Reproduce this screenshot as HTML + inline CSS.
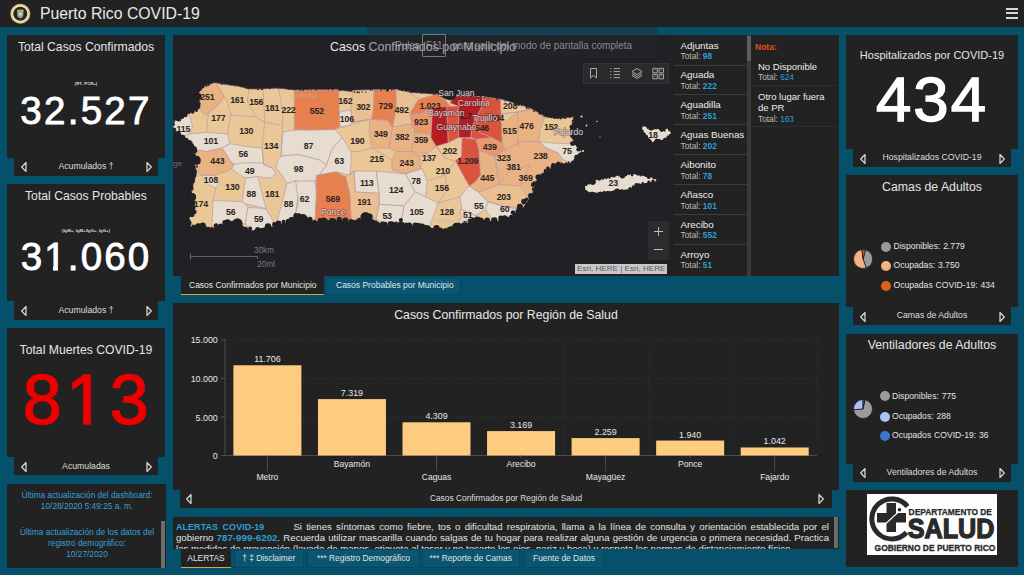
<!DOCTYPE html>
<html><head><meta charset="utf-8"><style>
*{margin:0;padding:0;box-sizing:border-box}
html,body{width:1024px;height:575px;overflow:hidden;background:#05506a;font-family:"Liberation Sans",sans-serif;color:#e6e6e6}
.a{position:absolute}
.c{position:absolute;background:#232222}
.t{position:absolute;white-space:nowrap;line-height:1}
.tc{position:absolute;white-space:nowrap;line-height:1;text-align:center}
.big{font-weight:400;-webkit-text-stroke:0.9px currentColor}
</style></head><body>
<div class="c" style="left:0;top:0;width:1024px;height:27px"></div>
<svg class="a" style="left:9px;top:3px" width="23" height="22" viewBox="0 0 23 22">
<circle cx="11.3" cy="10.7" r="10" fill="#d9c58a"/><circle cx="11.3" cy="10.7" r="8.4" fill="#f0e6c4"/>
<circle cx="11.3" cy="10.7" r="7" fill="#2b2416"/><path d="M8.2 6.8h6.2v5.2c0 1.9-1.5 3-3.1 3.6c-1.6-.6-3.1-1.7-3.1-3.6z" fill="#8fa58a"/>
<rect x="8.2" y="6.8" width="6.2" height="2" fill="#b9a46a"/><circle cx="11.3" cy="11" r="1.6" fill="#d8e0d0"/></svg>
<div class="t" style="left:40px;top:6px;font-size:15.8px;color:#e9e9e9">Puerto Rico COVID-19</div>
<div class="a" style="left:1006px;top:8px;width:12px;height:2px;background:#d6d6d6"></div>
<div class="a" style="left:1006px;top:12px;width:12px;height:2px;background:#d6d6d6"></div>
<div class="a" style="left:1006px;top:17px;width:12px;height:2px;background:#d6d6d6"></div>
<div class="c" style="left:7px;top:35px;width:158px;height:122.5px"></div>
<div class="c" style="left:14px;top:156.5px;width:144px;height:19px"></div>
<div class="tc" style="left:7px;width:158px;top:41.4px;font-size:12.2px;color:#e4e4e4">Total Casos Confirmados</div>
<div class="tc" style="left:7px;width:158px;top:82px;font-size:4.3px;font-weight:700;color:#dcdcdc">(RT- PCR+)</div>
<div class="tc big" style="left:7px;width:158px;top:92.3px;font-size:38.5px;color:#fff;letter-spacing:2.3px;-webkit-text-stroke:0.9px #fff">32.527</div>
<div class="tc" style="left:7px;width:158px;top:161.8px;font-size:8.7px;color:#dedede">Acumulados †</div>
<svg class="a" style="left:19.5px;top:162.3px" width="8" height="10"><path d="M6 0.5 L1.7 5 L6 9.5 Z" fill="none" stroke="#cfcfcf" stroke-width="1.3" stroke-linejoin="round"/></svg>
<svg class="a" style="left:144.5px;top:162.3px" width="8" height="10"><path d="M2 0.5 L6.3 5 L2 9.5 Z" fill="none" stroke="#cfcfcf" stroke-width="1.3" stroke-linejoin="round"/></svg>
<div class="c" style="left:7px;top:184px;width:158px;height:117.4px"></div>
<div class="c" style="left:14px;top:300.4px;width:144px;height:19.4px"></div>
<div class="tc" style="left:7px;width:158px;top:190.3px;font-size:12.2px;color:#e4e4e4">Total Casos Probables</div>
<div class="tc" style="left:7px;width:158px;top:228.5px;font-size:4.3px;font-weight:700;color:#dcdcdc">(IgM+, IgM+/IgG+, IgG+)</div>
<div class="tc big" style="left:7px;width:158px;top:237.5px;font-size:38.5px;color:#fff;letter-spacing:2.1px;-webkit-text-stroke:0.9px #fff">31.060</div>
<div class="tc" style="left:7px;width:158px;top:305.8px;font-size:8.7px;color:#dedede">Acumulados †</div>
<svg class="a" style="left:19.5px;top:306.4px" width="8" height="10"><path d="M6 0.5 L1.7 5 L6 9.5 Z" fill="none" stroke="#cfcfcf" stroke-width="1.3" stroke-linejoin="round"/></svg>
<svg class="a" style="left:144.5px;top:306.4px" width="8" height="10"><path d="M2 0.5 L6.3 5 L2 9.5 Z" fill="none" stroke="#cfcfcf" stroke-width="1.3" stroke-linejoin="round"/></svg>
<div class="c" style="left:7px;top:328.2px;width:158px;height:128.5px"></div>
<div class="c" style="left:14px;top:455.7px;width:144px;height:19.8px"></div>
<div class="tc" style="left:7px;width:158px;top:344.2px;font-size:12.2px;color:#e4e4e4">Total Muertes COVID-19</div>
<div class="tc big" style="left:9px;width:158px;top:364.5px;font-size:70px;color:#ee0000;letter-spacing:4.5px;-webkit-text-stroke:1.4px #ee0000">813</div>
<div class="tc" style="left:7px;width:158px;top:461.8px;font-size:8.7px;color:#dedede">Acumuladas</div>
<svg class="a" style="left:19.5px;top:461.9px" width="8" height="10"><path d="M6 0.5 L1.7 5 L6 9.5 Z" fill="none" stroke="#cfcfcf" stroke-width="1.3" stroke-linejoin="round"/></svg>
<svg class="a" style="left:144.5px;top:461.9px" width="8" height="10"><path d="M2 0.5 L6.3 5 L2 9.5 Z" fill="none" stroke="#cfcfcf" stroke-width="1.3" stroke-linejoin="round"/></svg>
<div class="c" style="left:44.5px;top:265.6px;width:8.5px;height:6px"></div>
<div class="c" style="left:58px;top:265.6px;width:8px;height:6px"></div>
<div class="c" style="left:69.5px;top:417.6px;width:13.5px;height:8px"></div>
<div class="c" style="left:91px;top:417.6px;width:14px;height:8px"></div>
<div class="c" style="left:7px;top:484px;width:159px;height:84px"></div>
<div class="a" style="left:161px;top:521px;width:4px;height:47px;background:#6b6b6b"></div>
<div class="tc" style="left:7px;width:160px;top:491px;font-size:8.3px;color:#35a0d4">Última actualización del dashboard:</div>
<div class="tc" style="left:7px;width:160px;top:502px;font-size:8.3px;color:#35a0d4">10/28/2020 5:49:25 a. m.</div>
<div class="tc" style="left:7px;width:160px;top:527.8px;font-size:8.3px;color:#35a0d4">Última actualización de los datos del</div>
<div class="tc" style="left:7px;width:160px;top:538.8px;font-size:8.3px;color:#35a0d4">registro demográfico:</div>
<div class="tc" style="left:7px;width:160px;top:549.8px;font-size:8.3px;color:#35a0d4">10/27/2020</div>
<div class="c" style="left:846px;top:35px;width:172px;height:113.6px"></div>
<div class="c" style="left:853px;top:147.6px;width:158px;height:19.8px"></div>
<div class="tc" style="left:846px;width:172px;top:49.7px;font-size:11px;color:#e4e4e4">Hospitalizados por COVID-19</div>
<div class="tc big" style="left:846px;width:172px;top:67.5px;font-size:63.5px;color:#fff;letter-spacing:2px;-webkit-text-stroke:1.4px #fff">434</div>
<div class="tc" style="left:846px;width:172px;top:153px;font-size:8.7px;color:#dedede">Hospitalizados COVID-19</div>
<svg class="a" style="left:858.5px;top:153.8px" width="8" height="10"><path d="M6 0.5 L1.7 5 L6 9.5 Z" fill="none" stroke="#cfcfcf" stroke-width="1.3" stroke-linejoin="round"/></svg>
<svg class="a" style="left:997.5px;top:153.8px" width="8" height="10"><path d="M2 0.5 L6.3 5 L2 9.5 Z" fill="none" stroke="#cfcfcf" stroke-width="1.3" stroke-linejoin="round"/></svg>
<div class="c" style="left:846px;top:174.8px;width:172px;height:132.6px"></div>
<div class="c" style="left:853px;top:306.4px;width:158px;height:18.6px"></div>
<div class="tc" style="left:846px;width:172px;top:181px;font-size:12.3px;color:#e4e4e4">Camas de Adultos</div>
<div class="tc" style="left:846px;width:172px;top:311px;font-size:8.7px;color:#dedede">Camas de Adultos</div>
<svg class="a" style="left:858.5px;top:312.0px" width="8" height="10"><path d="M6 0.5 L1.7 5 L6 9.5 Z" fill="none" stroke="#cfcfcf" stroke-width="1.3" stroke-linejoin="round"/></svg>
<svg class="a" style="left:997.5px;top:312.0px" width="8" height="10"><path d="M2 0.5 L6.3 5 L2 9.5 Z" fill="none" stroke="#cfcfcf" stroke-width="1.3" stroke-linejoin="round"/></svg>
<div class="a" style="left:881px;top:241.6px;width:10px;height:10px;border-radius:50%;background:#9b9b9b"></div>
<div class="t" style="left:893.5px;top:242.0px;font-size:8.6px;color:#e2e2e2;word-spacing:0.5px">Disponibles: 2.779</div>
<div class="a" style="left:881px;top:261px;width:10px;height:10px;border-radius:50%;background:#f3b184"></div>
<div class="t" style="left:893.5px;top:261.4px;font-size:8.6px;color:#e2e2e2;word-spacing:0.5px">Ocupadas: 3.750</div>
<div class="a" style="left:881px;top:280.5px;width:10px;height:10px;border-radius:50%;background:#d9631e"></div>
<div class="t" style="left:893.5px;top:280.9px;font-size:8.6px;color:#e2e2e2;word-spacing:0.5px">Ocupadas COVID-19: 434</div>
<svg class="a" style="left:852.2px;top:248.1px" width="22" height="22" viewBox="-11 -11 22 22"><path d="M0 0 L2.46 -9.18 A9.5 9.5 0 0 1 3.25 8.93 Z" fill="#9b9b9b" stroke="#222020" stroke-width="0.8" stroke-linejoin="round"/><path d="M0 0 L3.25 8.93 A9.5 9.5 0 1 1 -0.99 -9.45 Z" fill="#f3b184" stroke="#222020" stroke-width="0.8" stroke-linejoin="round"/><path d="M0 0 L-0.99 -9.45 A9.5 9.5 0 0 1 2.46 -9.18 Z" fill="#c9571a" stroke="#222020" stroke-width="0.8" stroke-linejoin="round"/></svg>
<div class="c" style="left:846px;top:333.8px;width:172px;height:129.8px"></div>
<div class="c" style="left:853px;top:462.6px;width:158px;height:19px"></div>
<div class="tc" style="left:846px;width:172px;top:339px;font-size:12.3px;color:#e4e4e4">Ventiladores de Adultos</div>
<div class="tc" style="left:846px;width:172px;top:468px;font-size:8.7px;color:#dedede">Ventiladores de Adultos</div>
<svg class="a" style="left:858.5px;top:468.40000000000003px" width="8" height="10"><path d="M6 0.5 L1.7 5 L6 9.5 Z" fill="none" stroke="#cfcfcf" stroke-width="1.3" stroke-linejoin="round"/></svg>
<svg class="a" style="left:997.5px;top:468.40000000000003px" width="8" height="10"><path d="M2 0.5 L6.3 5 L2 9.5 Z" fill="none" stroke="#cfcfcf" stroke-width="1.3" stroke-linejoin="round"/></svg>
<div class="a" style="left:879.5px;top:391.2px;width:10px;height:10px;border-radius:50%;background:#9b9b9b"></div>
<div class="t" style="left:892.0px;top:391.59999999999997px;font-size:8.6px;color:#e2e2e2;word-spacing:0.5px">Disponibles: 775</div>
<div class="a" style="left:879.5px;top:411.5px;width:10px;height:10px;border-radius:50%;background:#a9c2f3"></div>
<div class="t" style="left:892.0px;top:411.9px;font-size:8.6px;color:#e2e2e2;word-spacing:0.5px">Ocupados: 288</div>
<div class="a" style="left:879.5px;top:431px;width:10px;height:10px;border-radius:50%;background:#3b78c8"></div>
<div class="t" style="left:892.0px;top:431.4px;font-size:8.6px;color:#e2e2e2;word-spacing:0.5px">Ocupados COVID-19: 36</div>
<svg class="a" style="left:851.6px;top:398.4px" width="22" height="22" viewBox="-11 -11 22 22"><path d="M0 0 L1.98 -9.29 A9.5 9.5 0 1 1 -9.48 0.66 Z" fill="#9b9b9b" stroke="#222020" stroke-width="0.8" stroke-linejoin="round"/><path d="M0 0 L-9.48 0.66 A9.5 9.5 0 0 1 -0.00 -9.50 Z" fill="#a9c2f3" stroke="#222020" stroke-width="0.8" stroke-linejoin="round"/><path d="M0 0 L0.00 -9.50 A9.5 9.5 0 0 1 1.98 -9.29 Z" fill="#2f5f9e" stroke="#222020" stroke-width="0.8" stroke-linejoin="round"/></svg>
<div class="c" style="left:846px;top:490px;width:172px;height:77px"></div>
<div class="a" style="left:867px;top:494px;width:130px;height:61px;background:#fdfdfd"></div>
<svg class="a" style="left:867px;top:494px" width="130" height="61" viewBox="0 0 130 61">
<path d="M40.5 12.5 A20 20 0 1 0 39.5 38.5" fill="none" stroke="#2a2a2a" stroke-width="5"/>
<path d="M19.5 9 h9.5 v10 h10 v9.5 h-10 v9.5 h-9.5 v-9.5 h-9.5 v-9.5 h9.5 z" fill="#2a2a2a"/>
<line x1="13" y1="35" x2="33" y2="16.5" stroke="#fff" stroke-width="1.1"/>
<circle cx="32.5" cy="15.8" r="1.8" fill="#2a2a2a"/>
<g font-family="Liberation Sans" font-weight="700" fill="#2a2a2a" stroke="#2a2a2a">
<text x="41.6" y="21.3" font-size="8.6" textLength="83.3" lengthAdjust="spacingAndGlyphs" stroke-width="0.25">DEPARTAMENTO DE</text>
<text x="40.8" y="43.8" font-size="27" textLength="86.6" lengthAdjust="spacingAndGlyphs" stroke-width="1.3">SALUD</text>
<text x="7.6" y="57" font-size="8.8" textLength="120.7" lengthAdjust="spacingAndGlyphs" stroke-width="0.3">GOBIERNO DE PUERTO RICO</text>
</g>
</svg>
<div class="a" style="left:173px;top:35px;width:498px;height:241px;background:#212024"></div>
<svg class="a" style="left:0;top:0" width="1024" height="575" viewBox="0 0 1024 575">
<defs><clipPath id="mc"><rect x="173" y="35" width="498" height="241"/></clipPath></defs>
<g clip-path="url(#mc)">
<polygon points="173.5,121.1 180.4,116.7 189.1,113.2 197.8,109.8 200.4,104.5 199.5,92.4 204.8,86.3 215.2,82.8 227.4,84.6 239.5,86.3 248.2,88.9 262.1,88.9 277.7,88.0 294.3,90.0 318.0,89.5 338.7,89.8 352.0,91.5 362.0,92.4 374.3,89.8 396.0,89.5 410.0,92.4 437.8,94.1 444.8,99.3 455.2,95.9 483.0,96.7 500.4,99.3 521.2,105.4 531.5,109.1 544.9,116.8 558.3,118.7 573.6,116.8 571.7,128.3 573.6,143.6 581.2,151.2 577.4,157.0 569.8,162.7 558.3,164.6 544.9,170.4 535.3,181.9 531.5,195.0 525.8,201.6 511.7,215.7 494.5,222.0 475.7,220.4 456.9,225.1 441.3,229.8 425.6,228.2 410.0,226.7 401.3,221.2 384.6,225.4 367.9,217.1 351.2,221.2 331.8,219.8 315.0,221.2 303.9,218.5 295.6,214.3 288.3,221.2 267.4,226.8 253.5,231.0 239.6,225.4 225.7,222.6 211.8,228.2 197.8,225.4 189.5,226.8 188.1,218.5 195.1,211.5 189.5,205.9 190.9,197.6 192.3,187.8 195.1,178.1 196.4,168.4 199.2,160.0 194.3,158.4 196.1,149.7 192.6,142.8 183.9,135.8 173.5,130.0" fill="#e9c796" stroke="#6b4a5a" stroke-width="0.8"/>
<polygon points="173.5,121.1 180.4,116.7 189.1,114.1 192.6,127.1 189.1,134.1 183.9,135.8 173.5,130.0" fill="#e6dccf" stroke="#bc9aa6" stroke-width="0.7"/>
<polygon points="183.9,135.8 189.1,134.1 206.5,132.3 227.4,134.1 230.0,143.6 222.1,148.0 206.5,151.5 196.1,149.7 192.6,142.8" fill="#e6dccf" stroke="#bc9aa6" stroke-width="0.7"/>
<polygon points="222.1,148.0 230.0,143.6 244.7,146.3 262.1,148.0 263.8,165.4 251.7,163.6 237.8,165.4 230.8,161.9" fill="#e6dccf" stroke="#bc9aa6" stroke-width="0.7"/>
<polygon points="283.0,132.0 295.1,130.0 307.4,130.0 335.2,129.5 342.1,137.6 331.7,149.7 326.6,165.0 319.4,160.0 299.0,154.5 281.2,156.0 282.0,140.0" fill="#e6dccf" stroke="#bc9aa6" stroke-width="0.7"/>
<polygon points="281.2,156.0 299.0,154.5 319.4,160.0 326.6,165.0 319.2,175.3 315.0,180.9 303.9,182.3 295.6,180.9 287.0,183.7 281.3,174.0 276.0,168.0 278.0,160.0" fill="#e6dccf" stroke="#bc9aa6" stroke-width="0.7"/>
<polygon points="229.8,165.6 242.4,162.8 261.9,162.8 273.0,168.4 275.8,173.9 270.2,178.1 257.7,176.7 245.2,178.1 234.0,171.1" fill="#e6dccf" stroke="#bc9aa6" stroke-width="0.7"/>
<polygon points="202.0,175.3 214.5,175.3 218.7,183.7 215.9,187.8 206.2,183.7" fill="#e6dccf" stroke="#bc9aa6" stroke-width="0.7"/>
<polygon points="245.2,178.1 257.7,176.7 266.0,208.7 242.4,203.1" fill="#e6dccf" stroke="#bc9aa6" stroke-width="0.7"/>
<polygon points="213.1,200.4 242.4,201.8 247.9,207.3 245.2,224.0 225.7,222.6 211.8,228.2" fill="#e6dccf" stroke="#bc9aa6" stroke-width="0.7"/>
<polygon points="247.9,207.3 266.0,208.7 275.8,225.4 267.4,226.8 253.5,231.0 245.2,224.0" fill="#e6dccf" stroke="#bc9aa6" stroke-width="0.7"/>
<polygon points="281.3,206.0 286.9,183.7 295.3,180.9 300.0,183.7 295.3,214.3 288.3,221.2 275.8,225.4" fill="#e6dccf" stroke="#bc9aa6" stroke-width="0.7"/>
<polygon points="295.6,180.9 315.0,180.9 316.4,194.8 315.0,221.2 303.9,218.5 295.6,214.3 298.4,201.8" fill="#e6dccf" stroke="#bc9aa6" stroke-width="0.7"/>
<polygon points="331.7,149.7 342.1,137.6 350.8,151.5 351.2,160.0 349.8,175.3 335.9,171.8 324.8,173.9 319.2,175.3 326.6,165.0" fill="#e6dccf" stroke="#bc9aa6" stroke-width="0.7"/>
<polygon points="339.5,112.4 349.1,109.8 352.6,115.0 350.8,125.4 342.1,127.1 339.5,123.7" fill="#e6dccf" stroke="#bc9aa6" stroke-width="0.7"/>
<polygon points="354.0,171.1 376.3,171.1 379.1,193.4 355.4,192.0" fill="#e6dccf" stroke="#bc9aa6" stroke-width="0.7"/>
<polygon points="376.3,171.1 405.5,173.9 415.3,192.0 404.1,205.9 379.1,204.5 379.1,193.4" fill="#e6dccf" stroke="#bc9aa6" stroke-width="0.7"/>
<polygon points="379.1,204.5 404.1,205.9 401.3,221.2 384.6,225.4 376.3,218.5" fill="#e6dccf" stroke="#bc9aa6" stroke-width="0.7"/>
<polygon points="405.5,173.9 422.5,168.8 427.2,181.3 425.6,196.9 415.3,192.0" fill="#e6dccf" stroke="#bc9aa6" stroke-width="0.7"/>
<polygon points="415.3,192.0 425.6,196.9 438.2,203.2 433.5,215.7 428.8,228.2 410.0,226.7 401.3,221.2 404.1,205.9" fill="#e6dccf" stroke="#bc9aa6" stroke-width="0.7"/>
<polygon points="469.4,186.0 478.8,192.2 488.2,201.6 485.1,209.4 475.7,215.7 461.6,209.4 460.1,196.9 464.8,190.7" fill="#e6dccf" stroke="#bc9aa6" stroke-width="0.7"/>
<polygon points="460.0,209.0 475.7,215.7 475.7,220.4 456.9,225.1 461.6,217.0" fill="#e6dccf" stroke="#bc9aa6" stroke-width="0.7"/>
<polygon points="488.2,201.6 503.9,206.3 519.5,209.4 511.7,215.7 494.5,222.0 485.1,209.4" fill="#e6dccf" stroke="#bc9aa6" stroke-width="0.7"/>
<polygon points="539.1,141.7 558.3,143.6 573.6,143.6 581.2,151.2 577.4,157.0 569.8,162.7 562.1,158.9 558.3,153.2 544.9,147.4" fill="#e6dccf" stroke="#bc9aa6" stroke-width="0.7"/>
<polygon points="199.5,92.4 204.8,86.3 215.2,82.8 222.1,92.4 223.9,97.6 216.9,106.3 208.2,113.2 205.6,115.8 200.4,109.8 200.4,104.5" fill="#e8b283" stroke="#bc9aa6" stroke-width="0.7"/>
<polygon points="196.1,149.7 206.5,151.5 222.1,148.0 230.8,161.9 234.0,166.0 228.5,171.1 214.5,175.3 202.0,175.3 196.4,170.0 194.3,158.4" fill="#e8b283" stroke="#bc9aa6" stroke-width="0.7"/>
<polygon points="369.9,119.3 387.3,120.2 392.5,127.1 389.1,148.0 371.7,148.0 369.1,132.3" fill="#e8b283" stroke="#bc9aa6" stroke-width="0.7"/>
<polygon points="392.5,127.1 411.7,123.7 415.1,132.3 411.7,151.5 396.0,151.5 389.1,148.0" fill="#e8b283" stroke="#bc9aa6" stroke-width="0.7"/>
<polygon points="415.1,132.3 430.9,134.1 436.1,146.3 427.4,153.2 411.7,151.5" fill="#e8b283" stroke="#bc9aa6" stroke-width="0.7"/>
<polygon points="396.0,151.5 411.7,151.5 420.0,155.0 420.0,168.0 405.5,173.9 392.0,170.0 392.0,160.0" fill="#e8b283" stroke="#bc9aa6" stroke-width="0.7"/>
<polygon points="494.5,150.0 505.0,150.0 523.0,141.0 539.1,141.7 544.9,147.4 558.3,153.2 562.1,158.9 558.3,164.6 544.9,170.4 535.3,181.9 531.5,195.0 525.8,201.6 519.5,209.4 503.9,206.3 488.2,201.6 478.8,192.2 499.2,184.4" fill="#e8b283" stroke="#bc9aa6" stroke-width="0.7"/>
<polygon points="478.8,150.0 494.5,156.3 499.2,184.4 478.8,192.2 469.4,186.0 475.7,181.3 480.4,175.0" fill="#e8b283" stroke="#bc9aa6" stroke-width="0.7"/>
<polygon points="517.8,112.0 531.5,109.1 544.9,116.8 540.0,130.0 539.1,141.7 523.0,141.0 505.0,150.0 502.0,142.8 500.4,125.4" fill="#e8b283" stroke="#bc9aa6" stroke-width="0.7"/>
<polygon points="478.8,192.2 499.2,184.4 519.5,186.0 528.9,198.5 522.6,207.9 503.9,206.3 488.2,201.6" fill="#eabf92" stroke="#bc9aa6" stroke-width="0.7"/>
<polygon points="352.6,90.6 374.3,89.8 373.4,109.8 371.7,119.3 366.5,120.2 352.6,122.0 350.8,109.8" fill="#eabf92" stroke="#bc9aa6" stroke-width="0.7"/>
<polygon points="396.0,89.5 410.0,92.4 418.7,99.3 410.0,113.2 411.7,123.7 392.5,127.1 396.0,109.8" fill="#eabf92" stroke="#bc9aa6" stroke-width="0.7"/>
<polygon points="345.7,176.7 354.0,171.1 355.4,192.0 379.1,193.4 379.1,204.5 376.3,218.5 367.9,217.1 351.2,219.8 349.8,194.8" fill="#eabf92" stroke="#bc9aa6" stroke-width="0.7"/>
<polygon points="439.0,137.0 455.0,136.0 462.1,137.6 461.6,156.3 455.4,161.0 445.0,158.0 436.1,146.3" fill="#e9c796" stroke="#bc9aa6" stroke-width="0.7"/>
<polygon points="476.0,139.3 483.0,137.0 491.7,137.6 502.1,142.8 505.0,150.0 494.5,156.3 478.8,150.0" fill="#e8996a" stroke="#bc9aa6" stroke-width="0.7"/>
<polygon points="500.4,99.3 521.2,105.4 531.5,109.1 517.8,112.0 501.0,114.0" fill="#e9c796" stroke="#bc9aa6" stroke-width="0.7"/>
<polygon points="410.0,113.2 420.4,113.2 432.6,108.0 430.9,134.1 415.1,132.3 411.7,123.7" fill="#e8996a" stroke="#bc9aa6" stroke-width="0.7"/>
<polygon points="294.3,90.6 338.7,89.8 339.5,127.1 335.2,129.5 307.4,130.0 300.4,129.5 294.3,130.0" fill="#e6804e" stroke="#bc9aa6" stroke-width="0.7"/>
<polygon points="374.3,89.8 396.0,89.8 396.0,109.8 392.5,127.1 387.3,120.2 371.7,119.3 373.4,109.8" fill="#e6804e" stroke="#bc9aa6" stroke-width="0.7"/>
<polygon points="316.4,175.3 324.8,173.9 335.9,171.8 345.7,176.7 349.8,194.8 351.2,219.8 331.8,219.8 315.0,221.2 316.4,194.8" fill="#e6804e" stroke="#bc9aa6" stroke-width="0.7"/>
<polygon points="418.7,99.3 437.8,94.1 444.8,99.3 450.0,106.3 432.6,108.0 420.4,113.2 410.0,113.2" fill="#e6804e" stroke="#bc9aa6" stroke-width="0.7"/>
<polygon points="462.1,137.6 476.0,139.3 478.8,150.0 480.4,175.0 475.7,181.3 469.4,186.0 464.8,178.2 455.4,161.0 461.6,156.3" fill="#d9533d" stroke="#bc9aa6" stroke-width="0.7"/>
<polygon points="483.0,96.7 500.4,99.3 502.1,142.8 491.7,137.6 479.5,132.3 476.0,118.0 481.0,108.0" fill="#d9533d" stroke="#bc9aa6" stroke-width="0.7"/>
<polygon points="446.5,106.3 458.7,106.3 458.7,137.6 448.2,142.8" fill="#d9533d" stroke="#bc9aa6" stroke-width="0.7"/>
<polygon points="476.0,118.0 479.5,132.3 491.7,137.6 476.0,139.3 470.8,137.6 471.5,128.0" fill="#d9533d" stroke="#bc9aa6" stroke-width="0.7"/>
<polygon points="432.6,108.0 446.5,106.3 448.2,142.8 436.1,146.3 430.9,137.6" fill="#b71d20" stroke="#bc9aa6" stroke-width="0.7"/>
<polygon points="455.2,96.0 483.0,96.7 481.0,108.0 476.0,118.0 471.5,128.0 470.8,137.6 458.7,137.6 458.7,106.3 450.0,103.0" fill="#b71d20" stroke="#bc9aa6" stroke-width="0.7"/>
<polyline points="216.0,82.8 227.4,101.0 230.8,115.0" fill="none" stroke="#bc9aa6" stroke-width="0.7"/>
<polyline points="230.8,115.0 255.2,116.7 263.8,121.9" fill="none" stroke="#bc9aa6" stroke-width="0.7"/>
<polyline points="249.1,88.9 247.3,101.0 255.2,115.0" fill="none" stroke="#bc9aa6" stroke-width="0.7"/>
<polyline points="263.0,89.0 264.7,121.9 262.1,148.0 263.8,165.4" fill="none" stroke="#bc9aa6" stroke-width="0.7"/>
<polyline points="264.7,121.9 281.2,125.4" fill="none" stroke="#bc9aa6" stroke-width="0.7"/>
<polyline points="278.6,88.2 283.0,115.0 281.2,155.0" fill="none" stroke="#bc9aa6" stroke-width="0.7"/>
<polyline points="230.8,115.0 227.4,134.1" fill="none" stroke="#bc9aa6" stroke-width="0.7"/>
<polyline points="208.2,113.2 206.5,132.3" fill="none" stroke="#bc9aa6" stroke-width="0.7"/>
<polyline points="336.0,128.9 366.5,120.2" fill="none" stroke="#bc9aa6" stroke-width="0.7"/>
<polyline points="359.5,151.5 371.7,148.0" fill="none" stroke="#bc9aa6" stroke-width="0.7"/>
<polyline points="350.8,151.5 359.5,151.5" fill="none" stroke="#bc9aa6" stroke-width="0.7"/>
<polyline points="352.6,122.0 369.9,119.3" fill="none" stroke="#bc9aa6" stroke-width="0.7"/>
<polyline points="263.8,165.4 273.0,168.4" fill="none" stroke="#bc9aa6" stroke-width="0.7"/>
<polyline points="287.0,183.7 286.9,183.7" fill="none" stroke="#bc9aa6" stroke-width="0.7"/>
<polyline points="213.1,200.4 215.9,187.8" fill="none" stroke="#bc9aa6" stroke-width="0.7"/>
<polyline points="197.8,173.9 202.0,175.3" fill="none" stroke="#bc9aa6" stroke-width="0.7"/>
<polyline points="392.0,160.0 371.7,148.0" fill="none" stroke="#bc9aa6" stroke-width="0.7"/>
<polyline points="354.0,171.1 349.8,175.3" fill="none" stroke="#bc9aa6" stroke-width="0.7"/>
<polyline points="420.0,155.0 427.4,153.2" fill="none" stroke="#bc9aa6" stroke-width="0.7"/>
<polyline points="420.0,168.0 422.5,168.8" fill="none" stroke="#bc9aa6" stroke-width="0.7"/>
<polyline points="427.2,181.3 445.0,175.0 455.4,161.0" fill="none" stroke="#bc9aa6" stroke-width="0.7"/>
<polyline points="438.2,203.2 460.1,196.9" fill="none" stroke="#bc9aa6" stroke-width="0.7"/>
<polyline points="436.1,146.3 445.0,158.0" fill="none" stroke="#bc9aa6" stroke-width="0.7"/>
<polyline points="427.4,153.2 420.0,168.0" fill="none" stroke="#bc9aa6" stroke-width="0.7"/>
<polyline points="445.0,175.0 447.0,190.0 438.2,203.2" fill="none" stroke="#bc9aa6" stroke-width="0.7"/>
<polyline points="500.4,103.0 500.4,99.3" fill="none" stroke="#bc9aa6" stroke-width="0.7"/>
<polyline points="505.0,150.0 510.0,170.0 499.2,184.4" fill="none" stroke="#bc9aa6" stroke-width="0.7"/>
<polyline points="501.0,114.0 517.8,112.0 531.5,109.1" fill="none" stroke="#bc9aa6" stroke-width="0.7"/>
<polyline points="517.8,112.0 518.0,147.0" fill="none" stroke="#bc9aa6" stroke-width="0.7"/>
<polyline points="510.0,170.0 530.0,165.0" fill="none" stroke="#bc9aa6" stroke-width="0.7"/>
<polyline points="519.5,186.0 530.0,165.0" fill="none" stroke="#bc9aa6" stroke-width="0.7"/>
<polygon points="585.1,185.7 596.6,180.0 619.5,175.2 634.8,174.2 654.0,178.0 657.8,180.9 642.5,183.8 627.2,189.5 608.0,191.4 590.8,193.3 585.1,189.5" fill="#e6dccf"/>
<polygon points="641.0,124.5 646.0,127.0 651.0,130.5 657.0,128.5 663.0,131.5 667.0,128.5 672.0,132.5 668.0,136.5 662.0,140.0 656.0,138.5 653.0,142.5 648.0,137.5 643.0,131.0" fill="#e6dccf"/>
<polygon points="438,92 443,96 447,99.5 451,100.5 455,98.5 457,94.5" fill="#212024"/>
<g fill="#e6dccf"><circle cx="581.5" cy="116.5" r="1.1"/><circle cx="586.5" cy="125.5" r="0.9"/><circle cx="597" cy="121.5" r="0.7"/><circle cx="583" cy="151" r="1"/><circle cx="600" cy="137" r="0.6"/></g>
<g fill="#212024"><circle cx="174.5" cy="121.0" r="0.9"/><circle cx="176.8" cy="118.5" r="2.3"/><circle cx="178.8" cy="119.1" r="2.5"/><circle cx="181.9" cy="116.8" r="2.3"/><circle cx="185.1" cy="114.8" r="2.5"/><circle cx="189.1" cy="113.3" r="0.7"/><circle cx="189.3" cy="112.5" r="0.9"/><circle cx="192.6" cy="111.9" r="1.8"/><circle cx="196.6" cy="110.7" r="1.3"/><circle cx="198.3" cy="107.8" r="1.5"/><circle cx="199.2" cy="105.7" r="1.2"/><circle cx="199.7" cy="103.8" r="1.0"/><circle cx="200.2" cy="99.3" r="0.4"/><circle cx="199.6" cy="97.2" r="2.1"/><circle cx="199.2" cy="95.3" r="2.0"/><circle cx="201.0" cy="90.5" r="0.4"/><circle cx="202.0" cy="88.9" r="0.5"/><circle cx="203.5" cy="87.0" r="1.1"/><circle cx="206.5" cy="85.9" r="0.9"/><circle cx="208.4" cy="85.0" r="1.1"/><circle cx="210.3" cy="84.1" r="0.5"/><circle cx="212.8" cy="83.3" r="0.4"/><circle cx="215.5" cy="82.5" r="0.5"/><circle cx="220.8" cy="83.6" r="0.8"/><circle cx="222.3" cy="84.2" r="0.8"/><circle cx="224.9" cy="84.2" r="0.4"/><circle cx="229.2" cy="84.8" r="0.7"/><circle cx="231.6" cy="84.9" r="0.6"/><circle cx="235.0" cy="86.0" r="0.6"/><circle cx="239.3" cy="85.8" r="0.8"/><circle cx="240.7" cy="86.4" r="0.8"/><circle cx="242.6" cy="87.3" r="0.3"/><circle cx="246.2" cy="88.5" r="0.4"/><circle cx="248.5" cy="88.3" r="0.8"/><circle cx="252.7" cy="88.9" r="0.3"/><circle cx="254.8" cy="88.6" r="0.3"/><circle cx="257.8" cy="89.3" r="0.9"/><circle cx="260.3" cy="89.0" r="0.4"/><circle cx="262.2" cy="89.2" r="0.9"/><circle cx="266.1" cy="88.5" r="0.2"/><circle cx="269.5" cy="88.5" r="0.7"/><circle cx="270.3" cy="88.0" r="0.7"/><circle cx="273.3" cy="87.9" r="0.4"/><circle cx="277.3" cy="87.6" r="0.8"/><circle cx="278.3" cy="88.4" r="0.6"/><circle cx="280.6" cy="88.2" r="0.4"/><circle cx="285.9" cy="88.5" r="0.5"/><circle cx="288.6" cy="89.4" r="0.5"/><circle cx="289.3" cy="89.1" r="0.4"/><circle cx="293.9" cy="89.6" r="0.5"/><circle cx="294.5" cy="89.6" r="0.7"/><circle cx="298.9" cy="89.6" r="0.5"/><circle cx="300.4" cy="89.9" r="0.8"/><circle cx="303.3" cy="90.1" r="0.9"/><circle cx="305.2" cy="89.6" r="0.3"/><circle cx="307.8" cy="89.4" r="0.8"/><circle cx="311.0" cy="90.0" r="0.6"/><circle cx="315.3" cy="89.0" r="0.7"/><circle cx="316.5" cy="89.8" r="0.8"/><circle cx="318.7" cy="89.4" r="0.4"/><circle cx="321.7" cy="89.2" r="0.5"/><circle cx="325.0" cy="89.2" r="0.5"/><circle cx="328.1" cy="89.5" r="0.8"/><circle cx="331.4" cy="89.8" r="0.2"/><circle cx="332.8" cy="89.6" r="0.8"/><circle cx="337.9" cy="89.7" r="0.6"/><circle cx="340.2" cy="89.7" r="1.3"/><circle cx="342.0" cy="90.2" r="0.4"/><circle cx="345.5" cy="90.6" r="0.7"/><circle cx="348.3" cy="90.8" r="0.6"/><circle cx="350.6" cy="90.8" r="0.6"/><circle cx="354.3" cy="91.9" r="0.8"/><circle cx="357.2" cy="92.3" r="0.9"/><circle cx="359.1" cy="92.3" r="0.9"/><circle cx="362.1" cy="91.9" r="0.7"/><circle cx="365.6" cy="91.9" r="0.7"/><circle cx="370.7" cy="89.8" r="0.9"/><circle cx="372.4" cy="89.8" r="0.6"/><circle cx="374.7" cy="89.8" r="0.5"/><circle cx="377.5" cy="90.0" r="0.4"/><circle cx="381.2" cy="89.8" r="0.9"/><circle cx="384.1" cy="88.8" r="1.0"/><circle cx="387.3" cy="89.9" r="1.5"/><circle cx="388.0" cy="89.9" r="0.8"/><circle cx="391.7" cy="89.7" r="0.8"/><circle cx="393.7" cy="89.2" r="0.8"/><circle cx="396.3" cy="89.5" r="0.3"/><circle cx="399.1" cy="89.6" r="0.9"/><circle cx="402.0" cy="89.8" r="1.4"/><circle cx="405.7" cy="91.2" r="0.5"/><circle cx="407.9" cy="92.0" r="0.3"/><circle cx="410.3" cy="92.6" r="0.6"/><circle cx="413.6" cy="92.7" r="0.4"/><circle cx="416.9" cy="93.0" r="0.3"/><circle cx="419.0" cy="92.9" r="0.2"/><circle cx="421.6" cy="93.4" r="0.5"/><circle cx="426.2" cy="93.1" r="0.5"/><circle cx="427.8" cy="93.0" r="0.6"/><circle cx="430.4" cy="93.4" r="0.8"/><circle cx="433.3" cy="94.1" r="0.8"/><circle cx="435.2" cy="94.2" r="0.7"/><circle cx="438.2" cy="94.0" r="0.8"/><circle cx="440.8" cy="96.3" r="0.4"/><circle cx="443.1" cy="97.5" r="0.5"/><circle cx="447.2" cy="98.0" r="0.6"/><circle cx="448.2" cy="98.2" r="0.8"/><circle cx="451.2" cy="97.1" r="0.6"/><circle cx="452.6" cy="96.7" r="0.7"/><circle cx="455.3" cy="96.0" r="0.2"/><circle cx="459.6" cy="95.8" r="0.6"/><circle cx="462.7" cy="96.2" r="0.8"/><circle cx="466.3" cy="96.1" r="0.3"/><circle cx="466.4" cy="96.0" r="0.8"/><circle cx="471.1" cy="96.2" r="0.8"/><circle cx="473.3" cy="95.9" r="0.8"/><circle cx="476.3" cy="96.1" r="0.8"/><circle cx="478.1" cy="96.6" r="0.2"/><circle cx="480.5" cy="96.4" r="0.8"/><circle cx="484.8" cy="97.4" r="0.7"/><circle cx="488.2" cy="97.3" r="0.7"/><circle cx="490.7" cy="97.9" r="0.3"/><circle cx="491.9" cy="98.1" r="0.4"/><circle cx="496.7" cy="98.8" r="0.9"/><circle cx="498.9" cy="98.9" r="0.7"/><circle cx="502.1" cy="99.9" r="0.3"/><circle cx="504.8" cy="100.9" r="0.5"/><circle cx="505.8" cy="100.7" r="0.5"/><circle cx="510.0" cy="102.1" r="0.5"/><circle cx="512.0" cy="102.8" r="0.4"/><circle cx="516.0" cy="103.7" r="1.8"/><circle cx="518.1" cy="104.7" r="1.1"/><circle cx="519.2" cy="104.5" r="1.1"/><circle cx="521.5" cy="105.8" r="0.7"/><circle cx="526.0" cy="106.8" r="0.7"/><circle cx="526.8" cy="108.0" r="1.0"/><circle cx="528.9" cy="108.3" r="0.7"/><circle cx="532.1" cy="109.0" r="0.6"/><circle cx="534.0" cy="111.0" r="0.9"/><circle cx="539.3" cy="113.7" r="0.9"/><circle cx="540.6" cy="114.1" r="0.6"/><circle cx="543.0" cy="116.1" r="0.6"/><circle cx="545.3" cy="116.1" r="1.0"/><circle cx="548.2" cy="117.4" r="0.5"/><circle cx="551.4" cy="117.1" r="1.1"/><circle cx="554.7" cy="118.0" r="1.0"/><circle cx="557.6" cy="118.6" r="0.3"/><circle cx="560.7" cy="118.8" r="0.8"/><circle cx="564.2" cy="118.0" r="0.4"/><circle cx="565.4" cy="118.0" r="0.9"/><circle cx="569.5" cy="117.3" r="0.5"/><circle cx="571.0" cy="116.4" r="1.0"/><circle cx="574.3" cy="118.4" r="1.1"/><circle cx="572.5" cy="120.9" r="0.9"/><circle cx="572.3" cy="123.5" r="0.8"/><circle cx="571.9" cy="127.1" r="2.4"/><circle cx="571.7" cy="129.6" r="1.7"/><circle cx="571.6" cy="131.6" r="1.2"/><circle cx="572.1" cy="136.0" r="1.9"/><circle cx="573.0" cy="138.3" r="1.1"/><circle cx="572.3" cy="143.6" r="2.3"/><circle cx="573.8" cy="143.5" r="2.0"/><circle cx="577.0" cy="146.3" r="0.7"/><circle cx="578.6" cy="149.3" r="2.3"/><circle cx="579.8" cy="149.2" r="1.0"/><circle cx="580.4" cy="154.5" r="2.1"/><circle cx="579.8" cy="156.3" r="2.9"/><circle cx="576.6" cy="157.2" r="2.4"/><circle cx="574.8" cy="159.6" r="1.1"/><circle cx="572.2" cy="161.2" r="0.8"/><circle cx="568.6" cy="162.3" r="1.0"/><circle cx="566.1" cy="163.8" r="1.4"/><circle cx="561.5" cy="163.7" r="1.5"/><circle cx="558.2" cy="163.5" r="1.9"/><circle cx="556.8" cy="164.8" r="1.8"/><circle cx="553.3" cy="165.4" r="2.3"/><circle cx="551.9" cy="166.9" r="1.4"/><circle cx="547.9" cy="168.5" r="1.9"/><circle cx="544.9" cy="170.1" r="1.2"/><circle cx="545.7" cy="172.0" r="2.0"/><circle cx="542.0" cy="173.9" r="0.9"/><circle cx="539.8" cy="176.5" r="2.3"/><circle cx="537.8" cy="177.0" r="2.4"/><circle cx="537.8" cy="180.3" r="1.3"/><circle cx="534.5" cy="183.7" r="2.4"/><circle cx="533.2" cy="184.7" r="2.3"/><circle cx="533.1" cy="188.8" r="1.3"/><circle cx="532.8" cy="190.2" r="0.6"/><circle cx="531.3" cy="194.8" r="0.8"/><circle cx="530.9" cy="195.9" r="2.8"/><circle cx="530.6" cy="198.3" r="1.9"/><circle cx="526.6" cy="199.2" r="1.7"/><circle cx="523.9" cy="201.4" r="2.7"/><circle cx="523.6" cy="203.5" r="1.0"/><circle cx="519.9" cy="206.7" r="3.0"/><circle cx="518.6" cy="210.3" r="2.3"/><circle cx="518.0" cy="211.2" r="2.5"/><circle cx="513.0" cy="212.6" r="2.3"/><circle cx="514.4" cy="215.3" r="1.9"/><circle cx="510.8" cy="216.2" r="1.4"/><circle cx="507.2" cy="218.0" r="1.2"/><circle cx="504.7" cy="218.0" r="2.7"/><circle cx="503.3" cy="217.9" r="1.7"/><circle cx="500.9" cy="218.2" r="2.6"/><circle cx="500.0" cy="222.0" r="2.1"/><circle cx="494.3" cy="220.5" r="3.2"/><circle cx="494.2" cy="222.1" r="2.0"/><circle cx="491.1" cy="222.5" r="1.8"/><circle cx="487.2" cy="220.2" r="2.8"/><circle cx="484.2" cy="221.1" r="1.5"/><circle cx="481.8" cy="220.6" r="1.3"/><circle cx="480.7" cy="220.5" r="2.9"/><circle cx="477.4" cy="219.7" r="3.2"/><circle cx="473.3" cy="219.9" r="2.4"/><circle cx="472.3" cy="223.5" r="2.8"/><circle cx="470.0" cy="221.0" r="2.6"/><circle cx="465.0" cy="223.0" r="2.2"/><circle cx="462.9" cy="224.7" r="1.9"/><circle cx="459.8" cy="224.7" r="1.1"/><circle cx="458.9" cy="224.1" r="1.7"/><circle cx="456.0" cy="224.7" r="2.2"/><circle cx="454.1" cy="225.4" r="1.6"/><circle cx="451.0" cy="227.2" r="1.3"/><circle cx="449.0" cy="227.7" r="1.0"/><circle cx="445.0" cy="229.2" r="1.0"/><circle cx="443.2" cy="230.5" r="1.5"/><circle cx="440.5" cy="229.8" r="2.2"/><circle cx="436.5" cy="228.3" r="3.2"/><circle cx="434.0" cy="230.7" r="2.2"/><circle cx="432.1" cy="230.9" r="2.8"/><circle cx="429.6" cy="229.1" r="2.0"/><circle cx="426.4" cy="230.0" r="5.1"/><circle cx="424.7" cy="227.8" r="2.0"/><circle cx="421.6" cy="228.5" r="5.1"/><circle cx="418.4" cy="226.2" r="3.1"/><circle cx="415.5" cy="225.6" r="3.1"/><circle cx="412.7" cy="227.5" r="1.7"/><circle cx="410.5" cy="226.4" r="1.2"/><circle cx="409.3" cy="225.2" r="2.8"/><circle cx="406.5" cy="224.4" r="1.8"/><circle cx="403.3" cy="223.7" r="1.4"/><circle cx="400.9" cy="220.1" r="2.1"/><circle cx="396.2" cy="222.7" r="1.1"/><circle cx="394.1" cy="223.4" r="1.5"/><circle cx="391.8" cy="223.7" r="2.4"/><circle cx="390.0" cy="223.5" r="2.3"/><circle cx="385.0" cy="224.4" r="2.7"/><circle cx="383.4" cy="224.9" r="1.1"/><circle cx="382.4" cy="223.2" r="1.9"/><circle cx="378.1" cy="222.8" r="1.0"/><circle cx="376.2" cy="221.2" r="0.9"/><circle cx="372.3" cy="220.4" r="1.1"/><circle cx="369.9" cy="220.8" r="2.8"/><circle cx="369.6" cy="216.7" r="3.1"/><circle cx="365.6" cy="217.3" r="5.2"/><circle cx="363.0" cy="218.1" r="1.2"/><circle cx="360.3" cy="219.9" r="1.1"/><circle cx="358.9" cy="219.1" r="1.4"/><circle cx="356.9" cy="220.8" r="1.2"/><circle cx="352.5" cy="222.6" r="2.9"/><circle cx="350.9" cy="221.1" r="2.1"/><circle cx="345.9" cy="222.4" r="2.1"/><circle cx="345.4" cy="220.8" r="3.2"/><circle cx="340.6" cy="220.8" r="1.4"/><circle cx="339.2" cy="219.4" r="2.6"/><circle cx="335.3" cy="219.9" r="0.9"/><circle cx="332.7" cy="221.1" r="3.2"/><circle cx="330.9" cy="219.4" r="1.4"/><circle cx="327.4" cy="221.5" r="1.8"/><circle cx="325.8" cy="219.5" r="1.3"/><circle cx="323.4" cy="220.3" r="2.8"/><circle cx="319.9" cy="220.1" r="2.2"/><circle cx="316.2" cy="222.7" r="1.9"/><circle cx="314.2" cy="221.7" r="2.0"/><circle cx="309.9" cy="219.4" r="2.7"/><circle cx="309.5" cy="219.7" r="2.3"/><circle cx="304.7" cy="219.6" r="1.9"/><circle cx="302.8" cy="219.0" r="5.0"/><circle cx="299.4" cy="217.7" r="2.3"/><circle cx="298.7" cy="215.0" r="2.1"/><circle cx="295.7" cy="215.4" r="2.3"/><circle cx="291.1" cy="218.3" r="1.2"/><circle cx="291.6" cy="220.0" r="2.9"/><circle cx="288.4" cy="221.5" r="2.8"/><circle cx="283.5" cy="221.6" r="1.9"/><circle cx="282.6" cy="223.2" r="0.9"/><circle cx="278.5" cy="223.2" r="2.8"/><circle cx="276.5" cy="224.7" r="1.8"/><circle cx="274.4" cy="224.3" r="2.3"/><circle cx="270.3" cy="225.8" r="0.8"/><circle cx="268.0" cy="226.3" r="3.1"/><circle cx="265.3" cy="228.7" r="1.6"/><circle cx="263.5" cy="230.2" r="2.5"/><circle cx="261.1" cy="230.7" r="2.8"/><circle cx="257.7" cy="229.4" r="2.5"/><circle cx="256.6" cy="233.2" r="3.9"/><circle cx="252.7" cy="231.9" r="1.5"/><circle cx="250.2" cy="228.5" r="1.9"/><circle cx="245.6" cy="229.1" r="2.3"/><circle cx="244.5" cy="228.9" r="2.2"/><circle cx="238.8" cy="228.9" r="5.0"/><circle cx="237.4" cy="223.4" r="5.2"/><circle cx="236.4" cy="225.3" r="0.9"/><circle cx="232.4" cy="223.5" r="2.8"/><circle cx="231.0" cy="223.4" r="1.0"/><circle cx="227.7" cy="222.3" r="3.1"/><circle cx="224.8" cy="222.6" r="2.5"/><circle cx="220.5" cy="225.4" r="2.0"/><circle cx="220.4" cy="225.8" r="1.8"/><circle cx="216.1" cy="225.7" r="2.5"/><circle cx="212.1" cy="227.7" r="1.0"/><circle cx="211.6" cy="229.3" r="1.3"/><circle cx="208.8" cy="228.8" r="2.0"/><circle cx="205.4" cy="228.2" r="2.0"/><circle cx="202.8" cy="225.5" r="3.1"/><circle cx="198.4" cy="226.7" r="3.4"/><circle cx="197.8" cy="227.0" r="2.7"/><circle cx="193.3" cy="226.1" r="1.7"/><circle cx="189.7" cy="226.2" r="1.0"/><circle cx="189.2" cy="226.3" r="1.4"/><circle cx="188.6" cy="223.0" r="2.9"/><circle cx="187.4" cy="220.0" r="2.6"/><circle cx="188.2" cy="216.9" r="1.6"/><circle cx="191.9" cy="214.5" r="2.6"/><circle cx="194.4" cy="211.9" r="2.2"/><circle cx="193.6" cy="209.7" r="1.4"/><circle cx="192.7" cy="207.6" r="2.8"/><circle cx="191.3" cy="206.9" r="1.6"/><circle cx="189.0" cy="204.9" r="1.3"/><circle cx="190.1" cy="202.9" r="5.3"/><circle cx="190.8" cy="197.6" r="2.7"/><circle cx="192.1" cy="197.1" r="4.0"/><circle cx="191.1" cy="193.0" r="0.7"/><circle cx="192.0" cy="188.8" r="1.6"/><circle cx="191.5" cy="187.1" r="1.8"/><circle cx="193.3" cy="181.4" r="1.5"/><circle cx="193.8" cy="179.8" r="1.1"/><circle cx="194.6" cy="175.5" r="2.0"/><circle cx="195.3" cy="172.7" r="1.5"/><circle cx="195.3" cy="171.2" r="1.5"/><circle cx="196.9" cy="166.6" r="1.1"/><circle cx="196.8" cy="163.5" r="1.4"/><circle cx="198.5" cy="162.3" r="1.9"/><circle cx="196.5" cy="160.1" r="4.3"/><circle cx="194.0" cy="157.9" r="2.2"/><circle cx="194.1" cy="155.0" r="1.8"/><circle cx="195.5" cy="151.0" r="1.9"/><circle cx="194.4" cy="148.8" r="2.5"/><circle cx="192.0" cy="145.7" r="2.1"/><circle cx="191.8" cy="142.2" r="0.8"/><circle cx="190.0" cy="141.5" r="1.5"/><circle cx="187.1" cy="139.1" r="1.2"/><circle cx="183.4" cy="136.7" r="1.7"/><circle cx="182.6" cy="135.8" r="1.1"/><circle cx="179.0" cy="133.6" r="1.9"/><circle cx="177.7" cy="133.4" r="2.5"/><circle cx="174.1" cy="130.0" r="2.2"/><circle cx="173.6" cy="128.4" r="0.9"/><circle cx="173.8" cy="124.5" r="1.2"/><circle cx="172.7" cy="122.8" r="1.7"/><circle cx="586.3" cy="184.9" r="1.2"/><circle cx="589.3" cy="183.4" r="1.2"/><circle cx="592.8" cy="182.3" r="2.6"/><circle cx="594.4" cy="182.0" r="1.5"/><circle cx="599.3" cy="178.9" r="1.8"/><circle cx="600.0" cy="179.5" r="0.5"/><circle cx="602.8" cy="178.6" r="1.3"/><circle cx="606.3" cy="177.4" r="1.6"/><circle cx="609.5" cy="177.5" r="1.3"/><circle cx="613.6" cy="175.6" r="1.8"/><circle cx="614.8" cy="176.6" r="0.8"/><circle cx="618.8" cy="175.4" r="1.0"/><circle cx="622.5" cy="175.8" r="2.7"/><circle cx="625.3" cy="174.8" r="1.1"/><circle cx="625.9" cy="175.0" r="1.3"/><circle cx="628.9" cy="174.1" r="0.9"/><circle cx="632.1" cy="175.1" r="1.3"/><circle cx="637.0" cy="174.6" r="0.7"/><circle cx="638.2" cy="174.3" r="1.4"/><circle cx="640.6" cy="175.5" r="1.0"/><circle cx="645.9" cy="175.3" r="1.5"/><circle cx="646.4" cy="176.1" r="1.0"/><circle cx="648.7" cy="177.3" r="1.8"/><circle cx="653.3" cy="178.3" r="0.9"/><circle cx="654.6" cy="178.0" r="1.2"/><circle cx="656.7" cy="181.2" r="1.1"/><circle cx="652.9" cy="181.2" r="1.6"/><circle cx="648.8" cy="182.1" r="1.6"/><circle cx="646.6" cy="184.5" r="1.7"/><circle cx="642.8" cy="183.2" r="1.3"/><circle cx="642.7" cy="184.6" r="1.7"/><circle cx="639.2" cy="184.8" r="1.6"/><circle cx="636.7" cy="185.3" r="2.4"/><circle cx="633.3" cy="186.9" r="1.6"/><circle cx="629.9" cy="188.2" r="1.2"/><circle cx="628.6" cy="189.0" r="0.5"/><circle cx="625.7" cy="190.1" r="0.6"/><circle cx="621.8" cy="190.4" r="1.3"/><circle cx="621.4" cy="190.7" r="0.8"/><circle cx="617.2" cy="191.6" r="3.0"/><circle cx="615.0" cy="192.0" r="1.4"/><circle cx="613.4" cy="191.8" r="1.2"/><circle cx="608.8" cy="192.4" r="1.4"/><circle cx="607.1" cy="192.5" r="1.4"/><circle cx="604.0" cy="192.2" r="1.5"/><circle cx="600.5" cy="192.5" r="1.0"/><circle cx="599.3" cy="193.3" r="1.3"/><circle cx="594.5" cy="193.2" r="1.0"/><circle cx="592.6" cy="194.5" r="2.7"/><circle cx="590.9" cy="193.0" r="1.3"/><circle cx="585.5" cy="190.8" r="1.1"/><circle cx="584.9" cy="188.5" r="0.5"/><circle cx="642.0" cy="124.1" r="1.2"/><circle cx="643.9" cy="126.1" r="0.7"/><circle cx="647.7" cy="128.4" r="0.6"/><circle cx="649.4" cy="129.0" r="0.9"/><circle cx="650.9" cy="130.0" r="0.7"/><circle cx="656.2" cy="128.0" r="1.4"/><circle cx="660.3" cy="129.1" r="1.4"/><circle cx="661.5" cy="130.7" r="1.3"/><circle cx="664.7" cy="130.7" r="0.9"/><circle cx="669.4" cy="129.7" r="1.4"/><circle cx="671.2" cy="131.2" r="1.3"/><circle cx="671.2" cy="133.5" r="0.6"/><circle cx="669.5" cy="135.0" r="1.0"/><circle cx="667.5" cy="136.5" r="1.0"/><circle cx="664.7" cy="139.1" r="1.4"/><circle cx="659.0" cy="140.0" r="0.9"/><circle cx="658.8" cy="139.6" r="0.6"/><circle cx="654.4" cy="141.3" r="0.6"/><circle cx="650.1" cy="140.9" r="1.4"/><circle cx="648.8" cy="139.8" r="1.3"/><circle cx="646.7" cy="136.4" r="1.3"/><circle cx="644.9" cy="134.4" r="1.1"/><circle cx="643.8" cy="132.6" r="0.8"/><circle cx="642.5" cy="130.8" r="1.1"/><circle cx="641.3" cy="126.0" r="1.8"/></g>
<g font-family="Liberation Sans" font-weight="700" font-size="8.8" letter-spacing="-0.2" fill="#2c2424" text-anchor="middle">
<text x="207.4" y="100.4">251</text>
<text x="237.2" y="102.8">161</text>
<text x="256.2" y="105.3">156</text>
<text x="272.1" y="111.3">181</text>
<text x="288.5" y="112.8">222</text>
<text x="316.9" y="113.8">552</text>
<text x="345.3" y="103.8">162</text>
<text x="363.2" y="110.3">302</text>
<text x="385.6" y="108.8">729</text>
<text x="401.6" y="112.8">492</text>
<text x="430" y="108.8">1.023</text>
<text x="510.1" y="108.8">208</text>
<text x="346.8" y="121.8">106</text>
<text x="218.3" y="121.3">177</text>
<text x="246.2" y="134.2">130</text>
<text x="183.4" y="131.7">115</text>
<text x="210.8" y="143.7">101</text>
<text x="271.1" y="149.2">134</text>
<text x="308.4" y="148.7">87</text>
<text x="357.3" y="143.7">190</text>
<text x="380.7" y="136.7">349</text>
<text x="402.1" y="139.7">382</text>
<text x="421" y="142.7">359</text>
<text x="421" y="125.3">923</text>
<text x="509.6" y="133.7">515</text>
<text x="526.6" y="128.7">476</text>
<text x="551" y="129.7">152</text>
<text x="566.9" y="153.6">75</text>
<text x="653" y="137.7">18</text>
<text x="489.7" y="149.7">439</text>
<text x="449.9" y="154.1">202</text>
<text x="429" y="161.1">137</text>
<text x="406.6" y="166.1">243</text>
<text x="376.7" y="162.1">215</text>
<text x="339.3" y="163.6">63</text>
<text x="298.5" y="172.1">98</text>
<text x="217.3" y="164.1">443</text>
<text x="243.2" y="156.6">56</text>
<text x="249.7" y="174.1">49</text>
<text x="467.8" y="164.1">1.209</text>
<text x="503.7" y="161.1">323</text>
<text x="513.6" y="170.1">381</text>
<text x="540.5" y="159.1">238</text>
<text x="442.9" y="173.6">210</text>
<text x="487.2" y="180.5">445</text>
<text x="525.6" y="181">369</text>
<text x="416" y="184">78</text>
<text x="366.7" y="185.5">113</text>
<text x="396.1" y="192.5">124</text>
<text x="210.8" y="183">108</text>
<text x="232.3" y="189.5">130</text>
<text x="251.2" y="197">88</text>
<text x="272.1" y="197">181</text>
<text x="288.5" y="206.9">88</text>
<text x="304.5" y="202.4">62</text>
<text x="332.8" y="202.4">569</text>
<text x="364.2" y="204.9">191</text>
<text x="441.9" y="191">156</text>
<text x="503.7" y="199.5">203</text>
<text x="200.9" y="207.4">174</text>
<text x="230.8" y="214.9">56</text>
<text x="258.6" y="222.4">59</text>
<text x="387.1" y="218.9">53</text>
<text x="416.5" y="214.9">105</text>
<text x="446.9" y="215.4">128</text>
<text x="478.8" y="209.4">55</text>
<text x="467.8" y="217.9">51</text>
<text x="504.7" y="212.4">60</text>
<text x="613.2" y="185.5">23</text>
<text x="466" y="119.3">2.7</text>
<text x="497" y="121.3">504</text>
<text x="482" y="131">546</text>
</g>
<g font-family="Liberation Sans" font-size="8.6" fill="#dccfd6" stroke="#3a2a30" stroke-opacity="0.45" stroke-width="1.4" paint-order="stroke" text-anchor="middle">
<text x="456.4" y="96.4">San Juan</text>
<text x="473.8" y="106.3">Carolina</text>
<text x="446.4" y="116.3">Bayamón</text>
<text x="484.7" y="121.3">Trujillo</text>
<text x="456.4" y="130.2">Guaynabo</text>
<text x="568.4" y="135.2">Fajardo</text>
<text x="333.3" y="215.4">Ponce</text>
</g>
<g font-family="Liberation Sans" font-size="8" fill="#c9b9b0" text-anchor="middle" opacity="0.6">
<text x="304.5" y="97.9">Arecibo</text>
<text x="451.4" y="223.4">Guayama</text>
</g>
</g></svg>
<div class="c" style="left:671px;top:35px;width:168px;height:241px"></div>
<div class="t" style="left:680.5px;top:40.5px;font-size:9.8px;color:#eeeeee">Adjuntas</div>
<div class="t" style="left:680.5px;top:52.0px;font-size:8.4px;color:#bdbdbd">Total: <b style="color:#2a9fd8">98</b></div>
<div class="a" style="left:674px;top:64.5px;width:72.5px;height:1px;background:#3c3c3c"></div>
<div class="t" style="left:680.5px;top:70.4px;font-size:9.8px;color:#eeeeee">Aguada</div>
<div class="t" style="left:680.5px;top:81.9px;font-size:8.4px;color:#bdbdbd">Total: <b style="color:#2a9fd8">222</b></div>
<div class="a" style="left:674px;top:94.4px;width:72.5px;height:1px;background:#3c3c3c"></div>
<div class="t" style="left:680.5px;top:100.3px;font-size:9.8px;color:#eeeeee">Aguadilla</div>
<div class="t" style="left:680.5px;top:111.8px;font-size:8.4px;color:#bdbdbd">Total: <b style="color:#2a9fd8">251</b></div>
<div class="a" style="left:674px;top:124.3px;width:72.5px;height:1px;background:#3c3c3c"></div>
<div class="t" style="left:680.5px;top:130.2px;font-size:9.8px;color:#eeeeee">Aguas Buenas</div>
<div class="t" style="left:680.5px;top:141.7px;font-size:8.4px;color:#bdbdbd">Total: <b style="color:#2a9fd8">202</b></div>
<div class="a" style="left:674px;top:154.2px;width:72.5px;height:1px;background:#3c3c3c"></div>
<div class="t" style="left:680.5px;top:160.1px;font-size:9.8px;color:#eeeeee">Aibonito</div>
<div class="t" style="left:680.5px;top:171.6px;font-size:8.4px;color:#bdbdbd">Total: <b style="color:#2a9fd8">78</b></div>
<div class="a" style="left:674px;top:184.1px;width:72.5px;height:1px;background:#3c3c3c"></div>
<div class="t" style="left:680.5px;top:190.0px;font-size:9.8px;color:#eeeeee">Añasco</div>
<div class="t" style="left:680.5px;top:201.5px;font-size:8.4px;color:#bdbdbd">Total: <b style="color:#2a9fd8">101</b></div>
<div class="a" style="left:674px;top:214.0px;width:72.5px;height:1px;background:#3c3c3c"></div>
<div class="t" style="left:680.5px;top:219.89999999999998px;font-size:9.8px;color:#eeeeee">Arecibo</div>
<div class="t" style="left:680.5px;top:231.39999999999998px;font-size:8.4px;color:#bdbdbd">Total: <b style="color:#2a9fd8">552</b></div>
<div class="a" style="left:674px;top:243.89999999999998px;width:72.5px;height:1px;background:#3c3c3c"></div>
<div class="t" style="left:680.5px;top:249.79999999999998px;font-size:9.8px;color:#eeeeee">Arroyo</div>
<div class="t" style="left:680.5px;top:261.29999999999995px;font-size:8.4px;color:#bdbdbd">Total: <b style="color:#2a9fd8">51</b></div>
<div class="a" style="left:747px;top:35px;width:4px;height:241px;background:#3a3a3a"></div>
<div class="a" style="left:747px;top:36px;width:4px;height:25px;background:#5e5e5e"></div>
<div class="t" style="left:755px;top:43px;font-size:8.5px;font-weight:700;color:#e0501c">Nota:</div>
<div class="t" style="left:758px;top:61.5px;font-size:9.5px;color:#ececec">No Disponible</div>
<div class="t" style="left:758px;top:73px;font-size:8.3px;color:#bdbdbd">Total: <span style="color:#2a9fd8">624</span></div>
<div class="a" style="left:752px;top:85px;width:86px;height:1px;background:#2e2e2e"></div>
<div class="t" style="left:758px;top:91.5px;font-size:9.5px;color:#ececec">Otro lugar fuera</div>
<div class="t" style="left:758px;top:102.5px;font-size:9.5px;color:#ececec">de PR</div>
<div class="t" style="left:758px;top:114.5px;font-size:8.3px;color:#bdbdbd">Total: <span style="color:#2a9fd8">163</span></div>
<div class="a" style="left:752px;top:126px;width:86px;height:1px;background:#2e2e2e"></div>
<div class="t" style="left:330px;top:40.5px;font-size:12.4px;color:#e8e8e8">Casos Confirmados por Municipio</div>
<div class="a" style="left:367px;top:27px;width:291px;height:31px;background:rgba(40,40,44,0.36)"></div>
<div class="t" style="left:395px;top:41px;font-size:10px;color:rgba(175,175,175,0.75)">Pulsa</div>
<div class="a" style="left:421.5px;top:33.5px;width:24.5px;height:23px;border:1px solid rgba(140,140,140,0.8);border-radius:1px"></div>
<div class="t" style="left:426px;top:41px;font-size:10px;color:rgba(175,175,175,0.75)">F11</div>
<div class="t" style="left:452px;top:41px;font-size:10px;color:rgba(175,175,175,0.75)">para salir del modo de pantalla completa</div>
<div class="a" style="left:582.5px;top:62.5px;width:86px;height:21px;background:#2a2a2c;border:1px solid #333336"></div>
<svg class="a" style="left:580px;top:58px" width="92" height="30" viewBox="0 0 92 30" fill="none" stroke="#a8a8a8" stroke-width="1">
<path d="M10.5 10.5 h6 v9.5 l-3 -2.5 l-3 2.5 z"/>
<path d="M30.7 10 v10.5" stroke-dasharray="1.2 1.8"/>
<path d="M33.5 10.6 h6.5 M33.5 13.6 h6.5 M33.5 16.6 h6.5 M33.5 19.6 h6.5"/>
<path d="M52 13.5 l5 -3 l5 3 l-5 3 z M52 15.5 l5 3 l5 -3 M52 17.5 l5 3 l5 -3"/>
<path d="M72.8 10.3 h4.5 v4.5 h-4.5 z M79 10.3 h4.5 v4.5 h-4.5 z M72.8 16.3 h4.5 v4.5 h-4.5 z M79 16.3 h4.5 v4.5 h-4.5 z"/>
<path d="M74.5 12 h1 M80.7 12 h1 M74.5 18 h1 M80.7 18 h1" stroke-width="1.2"/>
</svg>
<div class="a" style="left:648px;top:221px;width:21px;height:39px;background:#2c2c2e"></div>
<div class="a" style="left:654px;top:230.5px;width:9px;height:1.1px;background:#bdbdbd"></div>
<div class="a" style="left:657.95px;top:226.5px;width:1.1px;height:9px;background:#bdbdbd"></div>
<div class="a" style="left:654px;top:248.8px;width:9px;height:1.1px;background:#bdbdbd"></div>
<div class="a" style="left:575px;top:264px;width:92px;height:10px;background:#c8c8c8"></div>
<div class="t" style="left:577px;top:264.8px;font-size:8.1px;color:#5a5a5a">Esri, HERE | Esri, HERE</div>
<div class="a" style="left:190px;top:256px;width:67px;height:1px;background:#5e5e5e"></div>
<div class="a" style="left:190px;top:253px;width:1px;height:7px;background:#5e5e5e"></div>
<div class="a" style="left:257px;top:256px;width:1px;height:3px;background:#5e5e5e"></div>
<div class="t" style="left:254px;top:246.5px;font-size:8.2px;color:#7c7c7c">30km</div>
<div class="t" style="left:257.3px;top:260.5px;font-size:8.2px;color:#7c7c7c">20ml</div>
<div class="t" style="left:173px;top:160px;font-size:8px;color:#6a6a6a">ge</div>
<div class="c" style="left:181px;top:276px;width:143px;height:19px"></div>
<div class="a" style="left:181px;top:293.5px;width:143px;height:1.5px;background:#d8a93a"></div>
<div class="t" style="left:189px;top:281px;font-size:8.5px;color:#e6e6e6">Casos Confirmados por Municipio</div>
<div class="a" style="left:325px;top:276.5px;width:136px;height:18.5px;background:#0a5670;border:1px solid #07465c"></div>
<div class="t" style="left:336px;top:281px;font-size:8.5px;color:#dfe8ec">Casos Probables por Municipio</div>
<div class="c" style="left:173px;top:303px;width:666px;height:187px"></div>
<div class="c" style="left:180px;top:489px;width:652px;height:19px"></div>
<div class="tc" style="left:173px;width:666px;top:309px;font-size:12.3px;color:#e8e8e8">Casos Confirmados por Región de Salud</div>
<div class="tc" style="left:173px;width:666px;top:494px;font-size:8.4px;color:#dedede">Casos Confirmados por Región de Salud</div>
<svg class="a" style="left:185px;top:494px" width="8" height="10"><path d="M6 0.5 L1.7 5 L6 9.5 Z" fill="none" stroke="#cfcfcf" stroke-width="1.3" stroke-linejoin="round"/></svg>
<svg class="a" style="left:817px;top:494px" width="8" height="10"><path d="M2 0.5 L6.3 5 L2 9.5 Z" fill="none" stroke="#cfcfcf" stroke-width="1.3" stroke-linejoin="round"/></svg>
<svg class="a" style="left:0;top:0" width="1024" height="575">
<line x1="225" y1="416.96500000000003" x2="817" y2="416.96500000000003" stroke="#363636" stroke-width="1" stroke-dasharray="1 2"/>
<line x1="225" y1="378.43" x2="817" y2="378.43" stroke="#363636" stroke-width="1" stroke-dasharray="1 2"/>
<line x1="225" y1="339.895" x2="817" y2="339.895" stroke="#363636" stroke-width="1" stroke-dasharray="1 2"/>
<line x1="564.5" y1="339.895" x2="564.5" y2="455.5" stroke="#363636" stroke-width="1" stroke-dasharray="1 2"/>
<line x1="649" y1="339.895" x2="649" y2="455.5" stroke="#363636" stroke-width="1" stroke-dasharray="1 2"/>
<line x1="733" y1="339.895" x2="733" y2="455.5" stroke="#363636" stroke-width="1" stroke-dasharray="1 2"/>
<line x1="817.5" y1="339.895" x2="817.5" y2="455.5" stroke="#363636" stroke-width="1" stroke-dasharray="1 2"/>
<line x1="225" y1="338.895" x2="225" y2="455.5" stroke="#4c4c4c" stroke-width="1"/>
<line x1="225" y1="455.5" x2="817" y2="455.5" stroke="#4c4c4c" stroke-width="1"/>
<line x1="221" y1="455.5" x2="225" y2="455.5" stroke="#4c4c4c" stroke-width="1"/>
<line x1="221" y1="416.96500000000003" x2="225" y2="416.96500000000003" stroke="#4c4c4c" stroke-width="1"/>
<line x1="221" y1="378.43" x2="225" y2="378.43" stroke="#4c4c4c" stroke-width="1"/>
<line x1="221" y1="339.895" x2="225" y2="339.895" stroke="#4c4c4c" stroke-width="1"/>
<rect x="233.4" y="365.281858" width="68" height="90.218142" fill="#fdcc7f"/>
<text x="267.4" y="362.281858" font-family="Liberation Sans" font-size="8.9" fill="#e6e6e6" text-anchor="middle">11.706</text>
<line x1="267.4" y1="455.5" x2="267.4" y2="471" stroke="#4c4c4c" stroke-width="1"/>
<text x="267.4" y="480" font-family="Liberation Sans" font-size="8.6" fill="#e6e6e6" text-anchor="middle">Metro</text>
<rect x="317.95" y="399.092467" width="68" height="56.407533" fill="#fdcc7f"/>
<text x="351.95" y="396.092467" font-family="Liberation Sans" font-size="8.9" fill="#e6e6e6" text-anchor="middle">7.319</text>
<line x1="351.95" y1="455.5" x2="351.95" y2="458" stroke="#4c4c4c" stroke-width="1"/>
<text x="351.95" y="467" font-family="Liberation Sans" font-size="8.6" fill="#e6e6e6" text-anchor="middle">Bayamón</text>
<rect x="402.5" y="422.290537" width="68" height="33.20946300000003" fill="#fdcc7f"/>
<text x="436.5" y="419.290537" font-family="Liberation Sans" font-size="8.9" fill="#e6e6e6" text-anchor="middle">4.309</text>
<line x1="436.5" y1="455.5" x2="436.5" y2="471" stroke="#4c4c4c" stroke-width="1"/>
<text x="436.5" y="480" font-family="Liberation Sans" font-size="8.6" fill="#e6e6e6" text-anchor="middle">Caguas</text>
<rect x="487.04999999999995" y="431.076517" width="68" height="24.423482999999976" fill="#fdcc7f"/>
<text x="521.05" y="428.076517" font-family="Liberation Sans" font-size="8.9" fill="#e6e6e6" text-anchor="middle">3.169</text>
<line x1="521.05" y1="455.5" x2="521.05" y2="458" stroke="#4c4c4c" stroke-width="1"/>
<text x="521.05" y="467" font-family="Liberation Sans" font-size="8.6" fill="#e6e6e6" text-anchor="middle">Arecibo</text>
<rect x="571.6" y="438.089887" width="68" height="17.410113000000024" fill="#fdcc7f"/>
<text x="605.6" y="435.089887" font-family="Liberation Sans" font-size="8.9" fill="#e6e6e6" text-anchor="middle">2.259</text>
<line x1="605.6" y1="455.5" x2="605.6" y2="471" stroke="#4c4c4c" stroke-width="1"/>
<text x="605.6" y="480" font-family="Liberation Sans" font-size="8.6" fill="#e6e6e6" text-anchor="middle">Mayagüez</text>
<rect x="656.15" y="440.54842" width="68" height="14.951579999999979" fill="#fdcc7f"/>
<text x="690.15" y="437.54842" font-family="Liberation Sans" font-size="8.9" fill="#e6e6e6" text-anchor="middle">1.940</text>
<line x1="690.15" y1="455.5" x2="690.15" y2="458" stroke="#4c4c4c" stroke-width="1"/>
<text x="690.15" y="467" font-family="Liberation Sans" font-size="8.6" fill="#e6e6e6" text-anchor="middle">Ponce</text>
<rect x="740.6999999999999" y="447.469306" width="68" height="8.030693999999983" fill="#fdcc7f"/>
<text x="774.6999999999999" y="444.469306" font-family="Liberation Sans" font-size="8.9" fill="#e6e6e6" text-anchor="middle">1.042</text>
<line x1="774.6999999999999" y1="455.5" x2="774.6999999999999" y2="471" stroke="#4c4c4c" stroke-width="1"/>
<text x="774.6999999999999" y="480" font-family="Liberation Sans" font-size="8.6" fill="#e6e6e6" text-anchor="middle">Fajardo</text>
<text x="217.8" y="459.1" font-family="Liberation Sans" font-size="8.9" fill="#e6e6e6" text-anchor="end">0</text>
<text x="217.8" y="420.56500000000005" font-family="Liberation Sans" font-size="8.9" fill="#e6e6e6" text-anchor="end">5.000</text>
<text x="217.8" y="382.03000000000003" font-family="Liberation Sans" font-size="8.9" fill="#e6e6e6" text-anchor="end">10.000</text>
<text x="217.8" y="343.495" font-family="Liberation Sans" font-size="8.9" fill="#e6e6e6" text-anchor="end">15.000</text>
</svg>
<div class="c" style="left:173px;top:517px;width:666px;height:32px;overflow:hidden"></div>
<div class="a" style="left:834px;top:517px;width:4px;height:31px;background:#6b6b6b"></div>
<div class="t" style="left:176px;top:523.2px;font-size:9.05px;font-weight:700;color:#2a9fd8;word-spacing:2px">ALERTAS COVID-19</div>
<div class="a" style="left:293.4px;top:521px;width:535.6px;font-size:9.6px;line-height:11px;color:#e2e2e2;text-align:justify;text-align-last:justify;white-space:nowrap;overflow:visible">Si tienes síntomas como fiebre, tos o dificultad respiratoria, llama a la línea de consulta y orientación establecida por el</div>
<div class="a" style="left:176px;top:532px;width:653px;font-size:9.6px;line-height:11px;color:#e2e2e2;text-align:justify;text-align-last:justify">gobierno <b style="color:#2a9fd8;font-size:9.8px">787-999-6202</b>. Recuerda utilizar mascarilla cuando salgas de tu hogar para realizar alguna gestión de urgencia o primera necesidad. Practica</div>
<div class="a" style="left:176px;top:543px;width:653px;height:6px;overflow:hidden;font-size:9.6px;line-height:11px;color:#e2e2e2;white-space:nowrap">las medidas de prevención (lavado de manos, etiqueta al toser y no tocarte los ojos, nariz y boca) y respeta las normas de distanciamiento físico.</div>
<div class="c" style="left:181px;top:549px;width:50px;height:19px"></div>
<div class="a" style="left:181px;top:566.5px;width:50px;height:1.5px;background:#d8a93a"></div>
<div class="tc" style="left:181px;width:50px;top:554px;font-size:8.4px;color:#e2e2e2">ALERTAS</div>
<div class="a" style="left:233.5px;top:549px;width:70.5px;height:19px;background:#0a5670;border:1px solid #07465c"></div>
<div class="tc" style="left:233.5px;width:70.5px;top:554px;font-size:8.4px;color:#e2e2e2">† ‡ Disclaimer</div>
<div class="a" style="left:307px;top:549px;width:113px;height:19px;background:#0a5670;border:1px solid #07465c"></div>
<div class="tc" style="left:307px;width:113px;top:554px;font-size:8.4px;color:#e2e2e2">*** Registro Demográfico</div>
<div class="a" style="left:421.5px;top:549px;width:98.5px;height:19px;background:#0a5670;border:1px solid #07465c"></div>
<div class="tc" style="left:421.5px;width:98.5px;top:554px;font-size:8.4px;color:#e2e2e2">*** Reporte de Camas</div>
<div class="a" style="left:524px;top:549px;width:80px;height:19px;background:#0a5670;border:1px solid #07465c"></div>
<div class="tc" style="left:524px;width:80px;top:554px;font-size:8.4px;color:#e2e2e2">Fuente de Datos</div>
</body></html>
